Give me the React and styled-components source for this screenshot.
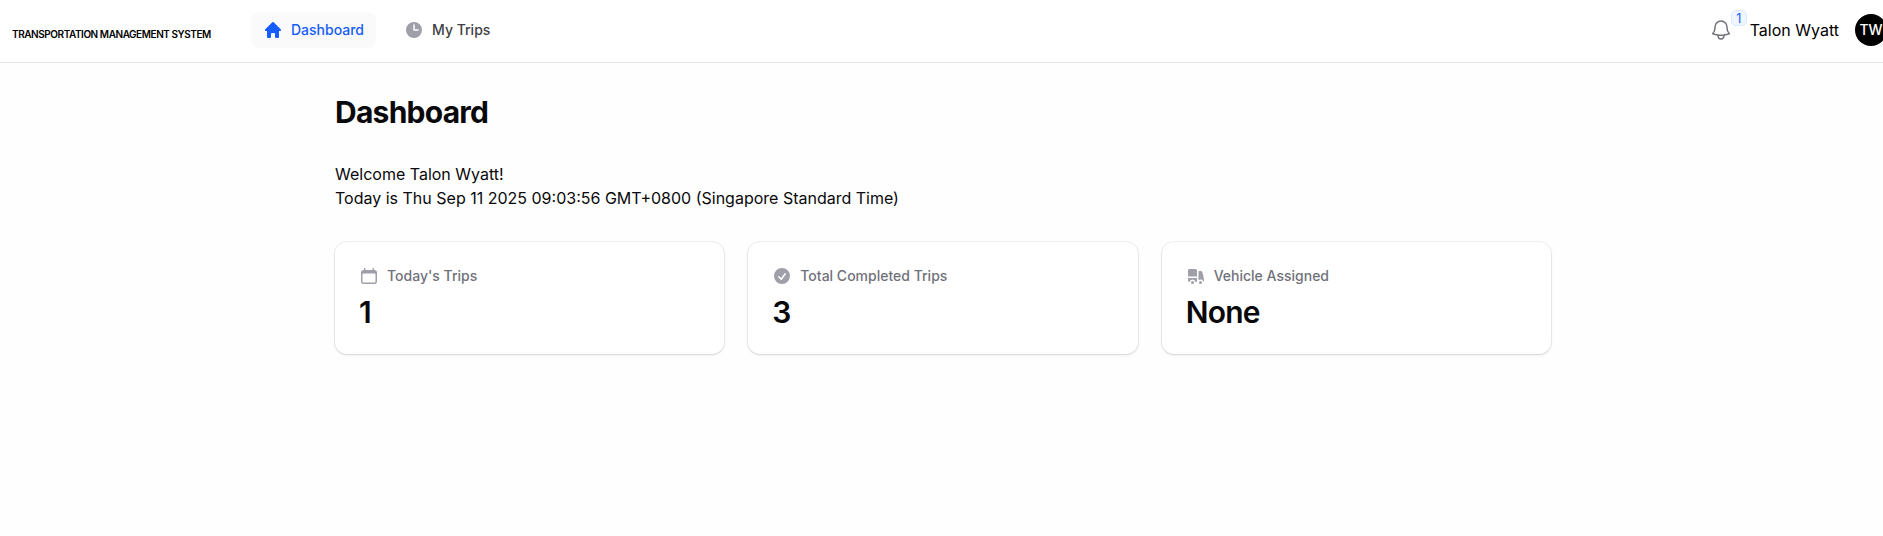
import React from "react";
import styled, { createGlobalStyle, css } from "styled-components";
import {
  HiMiniHome,
  HiMiniClock,
  HiMiniCalendar,
  HiMiniCheckCircle,
  HiMiniTruck,
  HiOutlineBell,
} from "react-icons/hi2";

const GlobalStyle = createGlobalStyle`
  *, *::before, *::after { box-sizing: border-box; }
  body {
    margin: 0;
    background: #fefefe;
    color: #09090b;
    font: 400 16px/24px Inter, "Liberation Sans", sans-serif;
    overflow: hidden;
  }
  h1, p, dl, dt, dd { margin: 0; }
`;

const Page = styled.div`
  width: 1886px;
  min-height: 100vh;
`;

const Header = styled.header`
  display: flex;
  align-items: center;
  height: 63px;
  padding: 0 0 2px 12px;
  background: #fff;
  border-bottom: 1px solid #e4e4e7;
`;

const Brand = styled.div`
  width: 239px;
  padding-top: 7px;
  font-size: 10px;
  line-height: 16px;
  font-weight: 600;
  letter-spacing: -0.44px;
  white-space: nowrap;
  color: #000;
`;

const Nav = styled.nav`
  display: flex;
  gap: 16px;
`;

const NavLink = styled.a`
  display: flex;
  align-items: center;
  gap: 8px;
  height: 36px;
  padding: 0 12px;
  border-radius: 8px;
  font-size: 14px;
  line-height: 20px;
  font-weight: 500;
  color: #3f3f46;

  svg {
    width: 20px;
    height: 20px;
    color: #9f9fa9;
  }

  ${({ $active }) =>
    $active &&
    css`
      background: #fafafa;
      color: #155dfc;
      svg { color: #155dfc; }
    `}
`;

const Account = styled.div`
  display: flex;
  align-items: center;
  margin-left: auto;
  margin-right: -1px;
`;

const BellButton = styled.div`
  position: relative;
  width: 24px;
  height: 24px;
  margin-right: 17px;
  color: #71717b;

  svg { display: block; width: 24px; height: 24px; }
`;

const Count = styled.span`
  position: absolute;
  left: 22px;
  top: -8px;
  width: 16px;
  height: 16px;
  border: 1px solid #dbeafe;
  border-radius: 5px;
  background: #eff6ff;
  color: #155dfc;
  font-size: 12.5px;
  line-height: 15px;
  text-align: center;
`;

const UserName = styled.span`
  margin-right: 16px;
  color: #000;
`;

const Avatar = styled.div`
  width: 32px;
  height: 32px;
  border-radius: 50%;
  background: #000;
  color: #fff;
  font-size: 14px;
  font-weight: 500;
  line-height: 32px;
  text-align: center;
`;

const Main = styled.main`
  width: 1216px;
  margin: 0 auto;
  padding-top: 31px;
`;

const Title = styled.h1`
  font-size: 30px;
  line-height: 36px;
  font-weight: 700;
  letter-spacing: -0.75px;
`;

const Intro = styled.div`
  margin: 32px 0;
`;

const Stats = styled.dl`
  display: grid;
  grid-template-columns: repeat(3, 1fr);
  gap: 24px;
`;

const Card = styled.div`
  height: 112px;
  padding: 24px;
  border-radius: 12px;
  background: #fff;
  box-shadow: 0 0 0 1px rgba(9, 9, 11, 0.05), 0 1px 3px rgba(0, 0, 0, 0.1),
    0 1px 2px -1px rgba(0, 0, 0, 0.1);
`;

const Label = styled.dt`
  display: flex;
  align-items: center;
  gap: 8px;
  font-size: 14px;
  line-height: 20px;
  font-weight: 500;
  color: #71717b;

  svg { width: 20px; height: 20px; color: #9f9fa9; }
`;

const Value = styled.dd`
  margin-top: 8px;
  font-size: 30px;
  line-height: 36px;
  font-weight: 600;
  letter-spacing: -0.75px;
`;

const stats = [
  { label: "Today's Trips", value: "1", Icon: HiMiniCalendar },
  { label: "Total Completed Trips", value: "3", Icon: HiMiniCheckCircle },
  { label: "Vehicle Assigned", value: "None", Icon: HiMiniTruck },
];

export default function App() {
  return (
    <Page>
      <GlobalStyle />
      <Header>
        <Brand>TRANSPORTATION MANAGEMENT SYSTEM</Brand>
        <Nav>
          <NavLink $active>
            <HiMiniHome />
            Dashboard
          </NavLink>
          <NavLink>
            <HiMiniClock />
            My Trips
          </NavLink>
        </Nav>
        <Account>
          <BellButton>
            <HiOutlineBell />
            <Count>1</Count>
          </BellButton>
          <UserName>Talon Wyatt</UserName>
          <Avatar>TW</Avatar>
        </Account>
      </Header>
      <Main>
        <Title>Dashboard</Title>
        <Intro>
          <p>Welcome Talon Wyatt!</p>
          <p>Today is Thu Sep 11 2025 09:03:56 GMT+0800 (Singapore Standard Time)</p>
        </Intro>
        <Stats>
          {stats.map(({ label, value, Icon }) => (
            <Card key={label}>
              <Label>
                <Icon />
                {label}
              </Label>
              <Value>{value}</Value>
            </Card>
          ))}
        </Stats>
      </Main>
    </Page>
  );
}
